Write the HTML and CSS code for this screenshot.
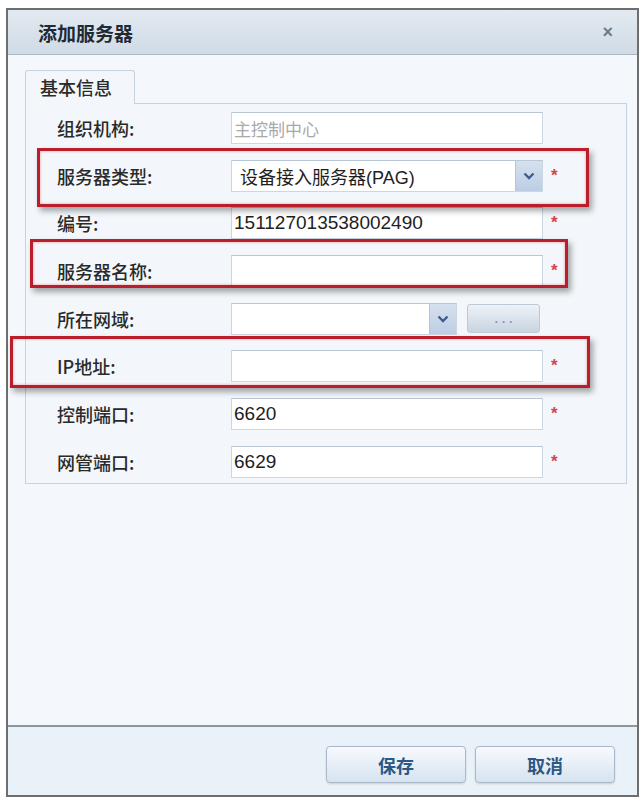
FILE: index.html
```html
<!DOCTYPE html>
<html lang="zh-CN">
<head>
    <meta charset="UTF-8">
    <meta name="viewport" content="width=device-width, initial-scale=1.0">
    <title>添加服务器</title>
    <link rel="stylesheet" href="styles.css">
</head>
<body>
    <div class="dialog">
        <!-- Barra de título -->
        <div class="titlebar">
            <span class="title">添加服务器</span>
            <span class="close">&#215;</span>
        </div>

        <div class="content">
            <div class="tabs">
                <span class="tab">基本信息</span>
            </div>
            <!-- Formulario del servidor -->
            <div class="panel">
                <div class="row">
                    <label>组织机构:</label>
                    <div class="field disabled">主控制中心</div>
                </div>
                <div class="row">
                    <label>服务器类型:</label>
                    <div class="field select">
                        <span class="value cjk">设备接入服务器(PAG)</span>
                        <span class="arrow"><svg width="12" height="8" viewBox="0 0 12 8"><path d="M1.5 1.5 L6 6 L10.5 1.5" fill="none" stroke="#3d5d8f" stroke-width="2.4"/></svg></span>
                    </div>
                    <span class="req">*</span>
                </div>
                <div class="row">
                    <label>编号:</label>
                    <div class="field">151127013538002490</div>
                    <span class="req">*</span>
                </div>
                <div class="row">
                    <label>服务器名称:</label>
                    <div class="field"></div>
                    <span class="req">*</span>
                </div>
                <div class="row">
                    <label>所在网域:</label>
                    <div class="field select short">
                        <span class="value"></span>
                        <span class="arrow"><svg width="12" height="8" viewBox="0 0 12 8"><path d="M1.5 1.5 L6 6 L10.5 1.5" fill="none" stroke="#3d5d8f" stroke-width="2.4"/></svg></span>
                    </div>
                    <span class="more">. . .</span>
                </div>
                <div class="row">
                    <label>IP地址:</label>
                    <div class="field"></div>
                    <span class="req">*</span>
                </div>
                <div class="row">
                    <label>控制端口:</label>
                    <div class="field">6620</div>
                    <span class="req">*</span>
                </div>
                <div class="row">
                    <label>网管端口:</label>
                    <div class="field">6629</div>
                    <span class="req">*</span>
                </div>
            </div>
        </div>

        <div class="footer">
            <button class="btn">保存</button>
            <button class="btn">取消</button>
        </div>

        <!-- Marcas rojas sobre los campos -->
        <div class="mark mark-type"></div>
        <div class="mark mark-name"></div>
        <div class="mark mark-ip"></div>
    </div>
</body>
</html>
```

FILE: styles.css
```css
/* Estilo general */
body {
    margin: 0;
    padding: 0;
    background: #ffffff;
    font-family: "Noto Sans CJK SC", "Liberation Sans", sans-serif;
    color: #222;
}

.dialog {
    position: relative;
    box-sizing: border-box;
    width: 633px;
    height: 789px;
    margin: 8px 0 0 6px;
    border: 2px solid #6e6e6e;
    background: #f4f8fc;
    display: flex;
    flex-direction: column;
}

/* Barra de título */
.titlebar {
    height: 44px;
    padding: 0 24px 0 30px;
    display: flex;
    align-items: center;
    justify-content: space-between;
    background: linear-gradient(#e3eaf1, #d0dbe6);
    border-bottom: 1px solid #a9b7c4;
}

.title {
    font-size: 19px;
    font-weight: bold;
    color: #1f2a36;
}

.close {
    font-family: "Liberation Sans", sans-serif;
    font-size: 18px;
    font-weight: bold;
    color: #6f7a86;
}

.content {
    flex: 1;
    padding: 15px 10px 0 17px;
}

/* Pestaña */
.tabs {
    display: flex;
}

.tab {
    position: relative;
    z-index: 1;
    box-sizing: border-box;
    width: 110px;
    height: 34px;
    margin-bottom: -1px;
    padding: 3px 0 0 14px;
    font-size: 18px;
    font-weight: 500;
    color: #2a2a2a;
    background: #f3f7fb;
    border: 1px solid #c6d3df;
    border-bottom: none;
    border-radius: 3px 3px 0 0;
}

.panel {
    box-sizing: border-box;
    height: 381px;
    padding: 8px 0 0 31px;
    background: #f3f7fb;
    border: 1px solid #c6d3df;
}

/* Filas del formulario */
.row {
    display: flex;
    align-items: center;
    height: 32px;
    margin-bottom: 15.7px;
}

.row label {
    width: 174px;
    font-size: 18px;
    font-weight: 500;
    color: #2a2a2a;
}

.field {
    box-sizing: border-box;
    width: 312px;
    height: 32px;
    padding: 0 0 0 2px;
    display: flex;
    align-items: center;
    font-family: "Liberation Sans", "Noto Sans CJK SC", sans-serif;
    font-size: 19px;
    color: #1e1e1e;
    background: #ffffff;
    border: 1px solid #ccd7e2;
    border-top-color: #b9c6d3;
}

.field.disabled {
    font-family: "Noto Sans CJK SC", sans-serif;
    font-size: 17px;
    color: #a9a9a9;
}

.field.select {
    padding: 0;
    justify-content: space-between;
}

.field.select .value {
    padding-left: 8px;
}

.value.cjk {
    font-family: "Liberation Sans", "Noto Sans CJK SC", sans-serif;
    font-size: 18px;
}

.field.short {
    width: 226px;
}

.arrow {
    width: 26px;
    height: 100%;
    display: flex;
    align-items: center;
    justify-content: center;
    background: linear-gradient(#d6e1ef, #bccde4);
    border-left: 1px solid #b5c5d8;
}

.req {
    margin-left: 8px;
    font-family: "Liberation Sans", sans-serif;
    font-size: 17px;
    font-weight: bold;
    color: #d8404c;
}

.more {
    box-sizing: border-box;
    width: 73px;
    height: 29px;
    margin-left: 10px;
    display: flex;
    align-items: center;
    justify-content: center;
    font-family: "Liberation Sans", sans-serif;
    font-size: 13px;
    font-weight: bold;
    color: #8a9db3;
    background: linear-gradient(#edf2f7, #c8d4e1);
    border: 1px solid #bccad8;
    border-radius: 3px;
}

/* Pie con botones */
.footer {
    height: 70px;
    padding: 19px 22px 0 0;
    box-sizing: border-box;
    display: flex;
    justify-content: flex-end;
    gap: 9px;
    border-top: 2px solid #8c969f;
    background: #eaf2f9;
}

.btn {
    width: 140px;
    height: 37px;
    font-family: "Noto Sans CJK SC", sans-serif;
    font-size: 18px;
    font-weight: bold;
    color: #2d5886;
    background: linear-gradient(#f7fafd, #d6e3ef);
    border: 1px solid #a9b9c9;
    border-radius: 4px;
    box-shadow: 0 1px 2px rgba(0, 0, 0, 0.15);
    cursor: pointer;
}

/* Recuadros rojos */
.mark {
    position: absolute;
    box-sizing: border-box;
    border: 3px solid #b81f2b;
    box-shadow: 3px 4px 6px rgba(0, 0, 0, 0.35), inset 0 0 3px rgba(230, 90, 100, 0.6);
}

.mark-type {
    left: 29px;
    top: 138px;
    width: 552px;
    height: 59px;
}

.mark-name {
    left: 22px;
    top: 229px;
    width: 538px;
    height: 49px;
}

.mark-ip {
    left: 2px;
    top: 326px;
    width: 580px;
    height: 52px;
}
```
